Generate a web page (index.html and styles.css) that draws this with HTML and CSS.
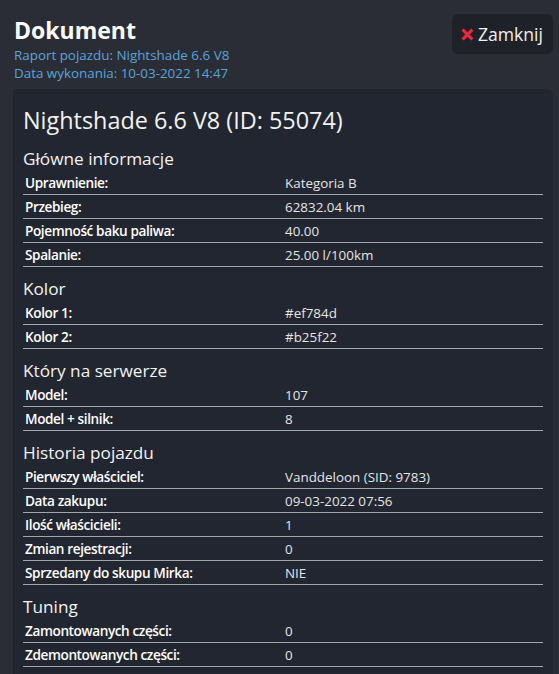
FILE: index.html
```html
<!DOCTYPE html>
<html lang="pl">
<head>
<meta charset="utf-8">
<link rel="stylesheet" href="styles.css">
</head>
<body>
<div class="page">
  <header class="header">
    <div class="head-text">
      <h1 class="title">Dokument</h1>
      <div class="sub">Raport pojazdu: Nightshade 6.6 V8</div>
      <div class="sub">Data wykonania: 10-03-2022 14:47</div>
    </div>
    <button class="close">
      <svg class="x-icon" viewBox="0 0 12 12" width="13" height="13"><path d="M1.5 1.5L10.5 10.5M10.5 1.5L1.5 10.5" stroke="#f0283c" stroke-width="2.8" stroke-linecap="butt"/></svg>
      <span>Zamknij</span>
    </button>
  </header>
  <main class="panel">
    <h2 class="veh">Nightshade 6.6 V8 (ID: 55074)</h2>

    <h3 class="sec">Główne informacje</h3>
    <table class="tbl">
      <tr><td>Uprawnienie:</td><td>Kategoria B</td></tr>
      <tr><td>Przebieg:</td><td>62832.04 km</td></tr>
      <tr><td>Pojemność baku paliwa:</td><td>40.00</td></tr>
      <tr><td>Spalanie:</td><td>25.00 l/100km</td></tr>
    </table>

    <h3 class="sec">Kolor</h3>
    <table class="tbl">
      <tr><td>Kolor 1:</td><td>#ef784d</td></tr>
      <tr><td>Kolor 2:</td><td>#b25f22</td></tr>
    </table>

    <h3 class="sec">Który na serwerze</h3>
    <table class="tbl">
      <tr><td>Model:</td><td>107</td></tr>
      <tr><td>Model + silnik:</td><td>8</td></tr>
    </table>

    <h3 class="sec">Historia pojazdu</h3>
    <table class="tbl">
      <tr><td>Pierwszy właściciel:</td><td>Vanddeloon (SID: 9783)</td></tr>
      <tr><td>Data zakupu:</td><td>09-03-2022 07:56</td></tr>
      <tr><td>Ilość właścicieli:</td><td>1</td></tr>
      <tr><td>Zmian rejestracji:</td><td>0</td></tr>
      <tr><td>Sprzedany do skupu Mirka:</td><td>NIE</td></tr>
    </table>

    <h3 class="sec">Tuning</h3>
    <table class="tbl">
      <tr><td>Zamontowanych części:</td><td>0</td></tr>
      <tr><td>Zdemontowanych części:</td><td>0</td></tr>
    </table>
  </main>
</div>
</body>
</html>
```
FILE: styles.css
```css
html, body {
  margin: 0;
  padding: 0;
  background: #2a2d36;
  height: 100%;
  overflow: hidden;
}
body {
  font-family: "Open Sans", "Noto Sans", sans-serif;
  color: #f2f2f2;
}
.page {
  padding: 0 6px 0 13px;
}
.header {
  display: flex;
  justify-content: space-between;
  align-items: flex-start;
  padding: 14px 0 7px 1px;
}
.title {
  margin: 0;
  font-size: 23px;
  font-weight: 700;
  line-height: 32px;
  color: #ffffff;
}
.sub {
  font-size: 13.4px;
  line-height: 18px;
  color: #5ba4d6;
}
.close {
  display: flex;
  align-items: center;
  gap: 4px;
  height: 40px;
  padding: 0 10px 0 9px;
  border: none;
  border-radius: 6px;
  background: #1f2129;
  color: #f0f0f0;
  font-family: "Open Sans", "Noto Sans", sans-serif;
  font-size: 17.6px;
}
.x-icon {
  display: block;
}
.panel {
  background: #222630;
  border-radius: 0 7px 0 0;
  padding: 15px 10px 20px 10px;
  min-height: 700px;
}
.veh {
  margin: 0;
  font-size: 23.4px;
  font-weight: 400;
  line-height: 33px;
}
.sec {
  margin: 10px 0 0 0;
  font-size: 17.2px;
  font-weight: 400;
  line-height: 24px;
}
.tbl {
  width: 100%;
  border-collapse: collapse;
  font-size: 13.4px;
}
.tbl td {
  width: 50%;
  padding: 0 2px;
  height: 23px;
  border-bottom: 1px solid #a3a5aa;
  vertical-align: middle;
}
.tbl td:first-child {
  font-size: 13.6px;
  font-weight: 600;
  letter-spacing: -0.4px;
  color: #ffffff;
}
.tbl td:last-child {
  color: #e4e4e4;
}
```
